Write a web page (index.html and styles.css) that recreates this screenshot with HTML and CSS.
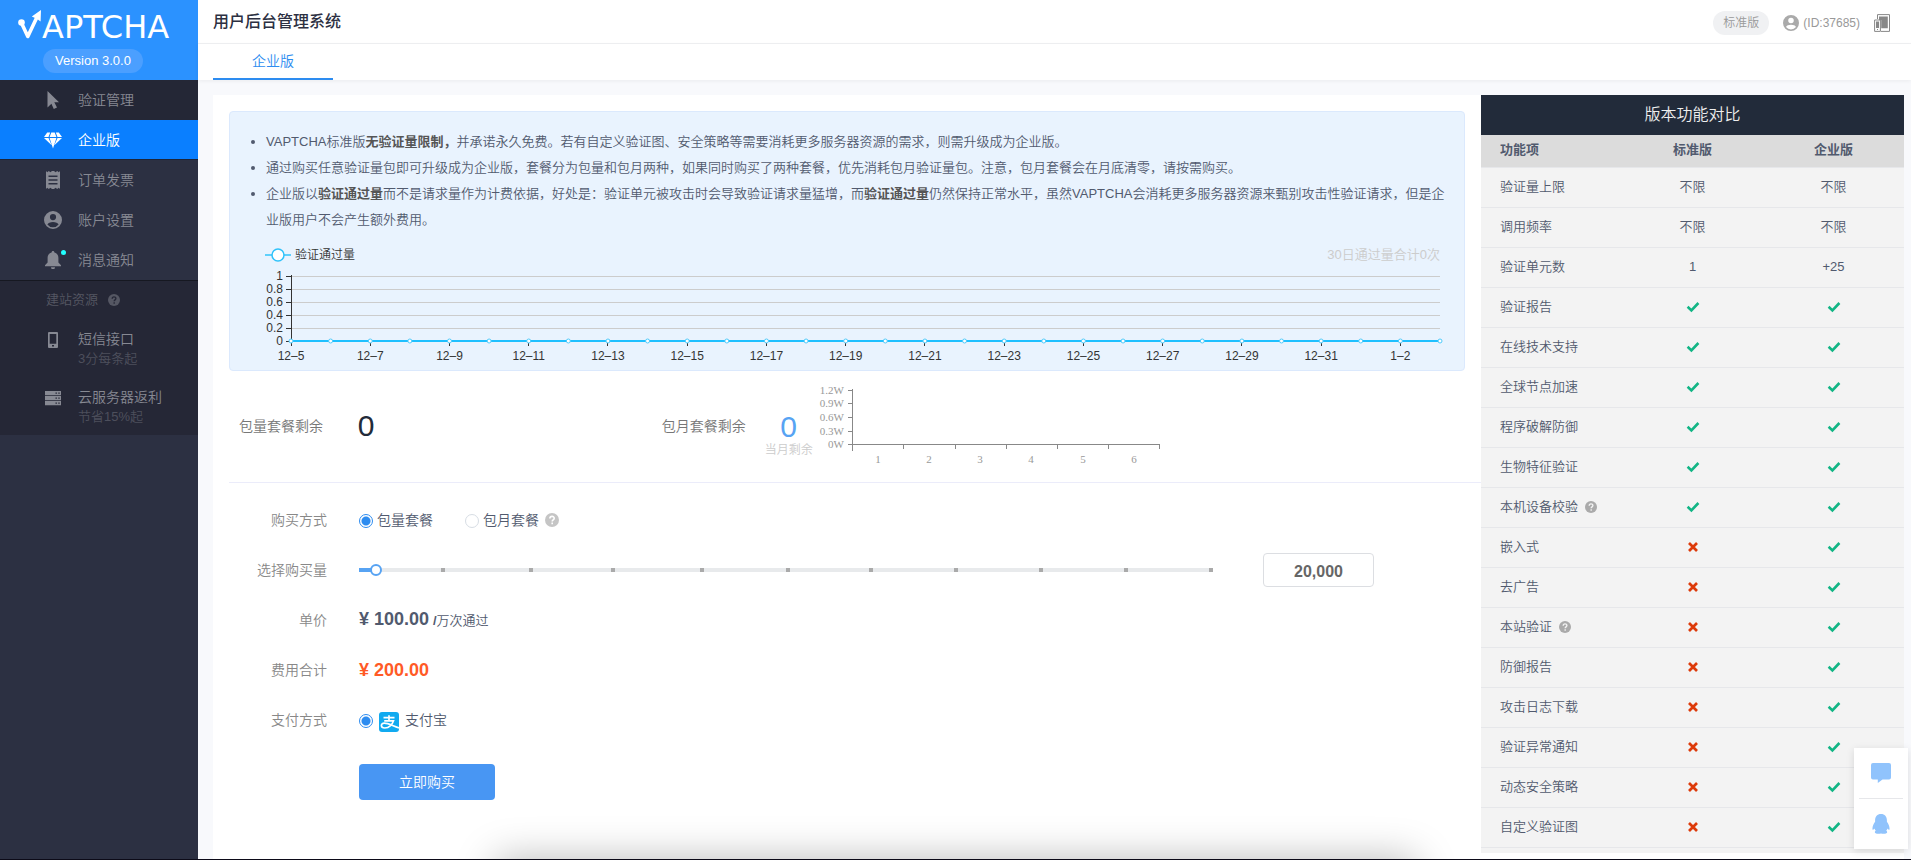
FILE: index.html
```html
<!DOCTYPE html>
<html lang="zh-CN">
<head>
<meta charset="utf-8">
<title>用户后台管理系统</title>
<link rel="stylesheet" href="styles.css">
</head>
<body>
<svg class="sprite" aria-hidden="true">
  <symbol id="i-check" viewBox="0 0 14 12"><path d="M1.6 5.8 5.4 9.4 12.4 2" fill="none" stroke="#12b585" stroke-width="2.6"/></symbol>
  <symbol id="i-cross" viewBox="0 0 14 12"><path d="M3 2 11 10M11 2 3 10" fill="none" stroke="#dd3a0a" stroke-width="2.7"/></symbol>
  <symbol id="i-help" viewBox="0 0 14 14"><circle cx="7" cy="7" r="7" fill="currentColor"/><path d="M4.9 5.6c0-3 4.3-2.8 4.3-.3 0 1.6-2 1.5-2 3.1M7.2 9.6v1.7" fill="none" stroke="var(--mark)" stroke-width="1.6"/></symbol>
  <symbol id="i-user" viewBox="0 0 18 18"><path fill="currentColor" fill-rule="evenodd" d="M9 0a9 9 0 1 1 0 18A9 9 0 0 1 9 0Zm0 3a3.1 3.1 0 1 0 0 6.200A3.100 3.100 0 0 0 9 3Zm0 8c-2.700 0-5 1-5.600 2.400a7 7 0 0 0 11.200 0C14 12 11.700 11 9 11Z"/></symbol>
</svg>

<nav class="sidebar">
  <div class="brand">
    <div class="logo">
      <svg class="logo-mark" viewBox="0 0 24 30" aria-hidden="true"><circle cx="3.500" cy="12.500" r="3.300" fill="#fff"/><path d="M3.500 13 9.800 26.500 19.500 6" fill="none" stroke="#fff" stroke-width="3.600" stroke-linejoin="round"/><path d="M13.800 6.600 23 0 22.600 11.500 19.200 9Z" fill="#fff"/></svg>
      <span>APTCHA</span>
    </div>
    <span class="version">Version 3.0.0</span>
  </div>
  <ul class="menu">
    <li><a class="menu-link visited" href="#"><svg viewBox="0 0 18 18"><path fill="currentColor" d="M3.500 0 15 11.200H10.300L13 16.600 9.800 18 7.400 12.800 3.500 16.500Z"/></svg>验证管理</a></li>
    <li><a class="menu-link active" href="#" aria-current="page"><svg viewBox="0 0 18 18"><path fill="currentColor" d="M3.200 1.500h3L4.500 6H0ZM7.300 1.500h3.400L12.400 6H5.600ZM11.800 1.500h3L18 6h-4.500ZM0 7h4.500l3.200 7.300ZM5.600 7h6.800L9 17.500ZM13.500 7H18l-7.700 7.300Z"/></svg>企业版</a></li>
    <li><a class="menu-link" href="#"><svg viewBox="0 0 18 18"><path fill="currentColor" fill-rule="evenodd" d="M2 0 3.200 1.200 4.800 0 6.400 1.200 8 0h2l1.600 1.200L13.200 0l1.600 1.200L16 0v18l-1.200-1.200L13.200 18l-1.600-1.200L10 18H8l-1.600-1.200L4.800 18l-1.600-1.200L2 18ZM4.500 4.500V6h9V4.500Zm0 3.800v1.500h9V8.300Zm0 3.700v1.500h9V12Z"/></svg>订单发票</a></li>
    <li><a class="menu-link" href="#"><svg><use href="#i-user"/></svg>账户设置</a></li>
    <li><a class="menu-link" href="#"><span class="bell"><svg viewBox="0 0 18 18"><path fill="currentColor" d="M9 0c.9 0 1.400.6 1.400 1.500 2.600.7 4 2.900 4 5.500v4.500L17 14.300v1H1v-1l2.600-2.800V7c0-2.600 1.400-4.800 4-5.500C7.600.6 8.100 0 9 0ZM7 16.300h4A2 2 0 0 1 7 16.300Z"/></svg></span>消息通知</a></li>
  </ul>
  <section class="resources">
    <h2>建站资源 <svg class="help"><use href="#i-help"/></svg></h2>
    <a class="resource" href="#"><svg viewBox="0 0 18 18"><path fill="currentColor" fill-rule="evenodd" d="M5 1h8a1 1 0 0 1 1 1v14a1 1 0 0 1-1 1H5a1 1 0 0 1-1-1V2a1 1 0 0 1 1-1Zm.700 2v9.800h6.600V3ZM8 14v1.500h2V14Z"/></svg><span>短信接口<small>3分每条起</small></span></a>
    <a class="resource" href="#"><svg viewBox="0 0 18 18"><path fill="currentColor" fill-rule="evenodd" d="M1 2h16v4.200H1Zm10.500 1.400v1.400h1.400V3.400Zm2.800 0v1.400h1.400V3.400ZM1 7h16v4.200H1Zm10.500 1.400v1.400h1.400V8.400Zm2.800 0v1.400h1.400V8.400ZM1 12h16v4.200H1Zm10.500 1.400v1.400h1.400v-1.400Zm2.800 0v1.400h1.400v-1.400Z"/></svg><span>云服务器返利<small>节省15%起</small></span></a>
  </section>
</nav>

<div class="page">
  <header class="topbar">
    <h1>用户后台管理系统</h1>
    <div class="account">
      <span class="plan">标准版</span>
      <a class="user" href="#"><svg><use href="#i-user"/></svg>(ID:37685)</a>
      <button class="devices" type="button" aria-label="设备"><svg viewBox="0 0 16 18"><path d="M3.500 5V.600h12v16.800H7" fill="none" stroke="#888"/><path fill="#888" d="M5 2.500h8.800v11.800H7.200V6H5Z"/><path d="M.600 6h5.800v11.400H.600Z" fill="#fff" stroke="#888"/><path fill="#888" d="M2 7.600h3V14H2ZM3 15h1v1H3Z"/></svg></button>
    </div>
  </header>
  <nav class="tabs"><a class="tab" href="#" aria-current="page">企业版</a></nav>

  <div class="content">
    <main class="main">
      <section class="notice">
        <ul>
          <li>VAPTCHA标准版<b>无验证量限制，</b>并承诺永久免费。若有自定义验证图、安全策略等需要消耗更多服务器资源的需求，则需升级成为企业版。</li>
          <li>通过购买任意验证量包即可升级成为企业版，套餐分为包量和包月两种，如果同时购买了两种套餐，优先消耗包月验证量包。注意，包月套餐会在月底清零，请按需购买。</li>
          <li>企业版以<b>验证通过量</b>而不是请求量作为计费依据，好处是：验证单元被攻击时会导致验证请求量猛增，而<b>验证通过量</b>仍然保持正常水平，虽然VAPTCHA会消耗更多服务器资源来甄别攻击性验证请求，但是企业版用户不会产生额外费用。</li>
        </ul>
        <div class="chart-head">
          <span class="legend"><svg viewBox="0 0 26 14"><path d="M0 7h26" stroke="#5fd0fb" stroke-width="2"/><circle cx="13" cy="7" r="6" fill="#fff" stroke="#2ec2fa" stroke-width="1.500"/></svg>验证通过量</span>
          <span class="total">30日通过量合计0次</span>
        </div>
        <div class="plot"><svg id="usage" role="img" aria-label="验证通过量"></svg></div>
      </section>

      <section class="quotas">
        <div class="quota"><span>包量套餐剩余</span><strong class="amount">0</strong></div>
        <div class="quota">
          <span>包月套餐剩余</span>
          <div class="monthly"><strong class="amount">0</strong><small>当月剩余</small></div>
          <svg class="months" viewBox="0 0 350 80">
            <path d="M37.500 3V65M33 4.500h4.500M33 17.500h4.500M33 31.500h4.500M33 45.500h4.500M33 58.500H345M88.500 58v5M140.500 58v5M191.500 58v5M242.500 58v5M293.500 58v5M344.500 58v5" fill="none" stroke="#888"/>
            <g text-anchor="end"><text x="29" y="8">1.2W</text><text x="29" y="21">0.9W</text><text x="29" y="35">0.6W</text><text x="29" y="49">0.3W</text><text x="29" y="62">0W</text></g>
            <g text-anchor="middle"><text x="63" y="77">1</text><text x="114" y="77">2</text><text x="165" y="77">3</text><text x="216" y="77">4</text><text x="268" y="77">5</text><text x="319" y="77">6</text></g>
          </svg>
        </div>
      </section>

      <form class="order">
        <div class="row"><span class="name">购买方式</span>
          <div class="field">
            <label class="choice"><input type="radio" name="mode" checked>包量套餐</label>
            <label class="choice"><input type="radio" name="mode">包月套餐</label>
            <svg class="help"><use href="#i-help"/></svg>
          </div>
        </div>
        <div class="row"><label class="name" for="amount">选择购买量</label>
          <div class="field volume">
            <div class="slider">
              <i style="left:9.8%"></i><i style="left:20.1%"></i><i style="left:29.8%"></i><i style="left:40.2%"></i><i style="left:50.2%"></i><i style="left:60%"></i><i style="left:69.9%"></i><i style="left:79.9%"></i><i style="left:89.8%"></i><i style="left:99.8%"></i>
              <input type="range" id="amount" min="0" max="1000000" step="10000" value="20000">
            </div>
            <input class="count" type="text" value="20,000" aria-label="购买量">
          </div>
        </div>
        <div class="row"><span class="name">单价</span><div class="field"><span class="price"><b>¥ 100.00</b> <span><b>/</b>万次通过</span></span></div></div>
        <div class="row"><span class="name">费用合计</span><div class="field"><b class="sum">¥ 200.00</b></div></div>
        <div class="row"><span class="name">支付方式</span>
          <div class="field">
            <label class="choice"><input type="radio" name="pay" checked><svg class="alipay" viewBox="0 0 20 20"><rect width="20" height="20" rx="3" fill="#11aaf0"/><path d="M4.500 5.700h11M10 3.200v5.600M5.200 8.800h9.300C13.500 12 10.500 16 5.800 16c-4.600 0-4.300-4.800-.5-4.800 4 0 8 2.600 14.700 4.800" fill="none" stroke="#fff" stroke-width="1.700"/></svg>支付宝</label>
          </div>
        </div>
        <div class="row submit"><button class="buy" type="button">立即购买</button></div>
      </form>
    </main>

    <aside class="compare">
      <h2>版本功能对比</h2>
      <table>
        <thead><tr><th>功能项</th><th>标准版</th><th>企业版</th></tr></thead>
        <tbody>
          <tr><td>验证量上限</td><td>不限</td><td>不限</td></tr>
          <tr><td>调用频率</td><td>不限</td><td>不限</td></tr>
          <tr><td>验证单元数</td><td>1</td><td>+25</td></tr>
          <tr><td>验证报告</td><td><svg><use href="#i-check"/></svg></td><td><svg><use href="#i-check"/></svg></td></tr>
          <tr><td>在线技术支持</td><td><svg><use href="#i-check"/></svg></td><td><svg><use href="#i-check"/></svg></td></tr>
          <tr><td>全球节点加速</td><td><svg><use href="#i-check"/></svg></td><td><svg><use href="#i-check"/></svg></td></tr>
          <tr><td>程序破解防御</td><td><svg><use href="#i-check"/></svg></td><td><svg><use href="#i-check"/></svg></td></tr>
          <tr><td>生物特征验证</td><td><svg><use href="#i-check"/></svg></td><td><svg><use href="#i-check"/></svg></td></tr>
          <tr><td>本机设备校验<svg class="help"><use href="#i-help"/></svg></td><td><svg><use href="#i-check"/></svg></td><td><svg><use href="#i-check"/></svg></td></tr>
          <tr><td>嵌入式</td><td><svg><use href="#i-cross"/></svg></td><td><svg><use href="#i-check"/></svg></td></tr>
          <tr><td>去广告</td><td><svg><use href="#i-cross"/></svg></td><td><svg><use href="#i-check"/></svg></td></tr>
          <tr><td>本站验证<svg class="help"><use href="#i-help"/></svg></td><td><svg><use href="#i-cross"/></svg></td><td><svg><use href="#i-check"/></svg></td></tr>
          <tr><td>防御报告</td><td><svg><use href="#i-cross"/></svg></td><td><svg><use href="#i-check"/></svg></td></tr>
          <tr><td>攻击日志下载</td><td><svg><use href="#i-cross"/></svg></td><td><svg><use href="#i-check"/></svg></td></tr>
          <tr><td>验证异常通知</td><td><svg><use href="#i-cross"/></svg></td><td><svg><use href="#i-check"/></svg></td></tr>
          <tr><td>动态安全策略</td><td><svg><use href="#i-cross"/></svg></td><td><svg><use href="#i-check"/></svg></td></tr>
          <tr><td>自定义验证图</td><td><svg><use href="#i-cross"/></svg></td><td><svg><use href="#i-check"/></svg></td></tr>
        </tbody>
      </table>
    </aside>
  </div>
</div>

<div class="contact">
  <button type="button" aria-label="在线咨询"><svg viewBox="0 0 20 20"><path fill="currentColor" d="M2 0h16a2 2 0 0 1 2 2v12.500a2 2 0 0 1-2 2h-6.500L6.800 20v-3.500H2a2 2 0 0 1-2-2V2a2 2 0 0 1 2-2Z"/></svg></button>
  <button type="button" aria-label="QQ"><svg viewBox="0 0 20 20"><path fill="currentColor" d="M10 0c3.800 0 5.900 2.500 5.900 6.300v1.500c1.600 2.300 2.900 4.700 2.600 7.600-.5 1-1.300-.2-2-.9-.2.900-.7 1.700-1.300 2.300 1 .5 1.200 1.200.7 2.200-2 1.100-4 .9-5.900.6-1.900.3-3.900.5-5.900-.6-.5-1-.3-1.700.7-2.200-.6-.6-1.100-1.400-1.300-2.300-.7.700-1.500 1.900-2 .9-.3-2.900 1-5.300 2.600-7.600V6.300C4.100 2.500 6.200 0 10 0Z"/></svg></button>
</div>
<div class="dock-shadow"></div>
<script src="chart.js"></script>
</body>
</html>
```
FILE: styles.css
```css
* { box-sizing: border-box; }
body {
  margin: 0;
  min-height: 100vh;
  display: flex;
  border-bottom: 1px solid #0c0a18;
  background: #f8f9fc;
  color: #515a6e;
  font: 14px/20px "Liberation Sans", "Noto Sans CJK SC", sans-serif;
  font-weight: 350;
}
h1, h2, ul { margin: 0; padding: 0; }
a { color: inherit; text-decoration: none; }
button { border: 0; padding: 0; background: none; font: inherit; cursor: pointer; }
svg { display: block; flex: none; }
.sprite { position: absolute; width: 0; height: 0; }
.help { width: 12px; height: 12px; color: #aaa; --mark: #f3f3f3; }

/* Sidebar */
.sidebar { flex: none; width: 198px; background: #2c3042; color: #878993; }
.brand { height: 80px; display: flex; flex-direction: column; background: #2b92ff; color: #fff; }
.logo { display: flex; height: 40px; padding: 10px 0 0 18px; font: 32px/34px "DejaVu Sans", sans-serif; }
.logo-mark { width: 24px; height: 30px; }
.version { width: 100px; margin: 9px 0 0 43px; border-radius: 12px; background: #4b9fff; font-size: 13px; line-height: 24px; text-align: center; }
.menu { list-style: none; }
.menu-link { display: flex; align-items: center; gap: 16px; height: 40px; padding-left: 44px; }
.menu-link svg { width: 18px; height: 18px; }
.menu-link.visited { background: #242736; }
.menu-link.active { background: #0a7fff; border-bottom: 1px solid #1d2538; color: #fff; }
.bell { position: relative; }
.bell::after { content: ""; position: absolute; top: -1px; right: -4px; width: 5px; height: 5px; border-radius: 50%; background: #2ff; }
.resources { border-top: 1px solid #161821; background: #252736; }
.resources h2 { display: flex; align-items: center; gap: 10px; height: 38px; padding-left: 46px; color: #555763; font-size: 13px; font-weight: 350; }
.resources .help { color: #555763; --mark: #252736; }
.resource { display: flex; gap: 16px; padding: 10px 0 8px 44px; }
.resource svg { width: 18px; height: 18px; margin-top: 2px; }
.resource small { display: block; color: #4d4f5c; font-size: 13px; }

/* Header */
.page { flex: 1; min-width: 0; display: flex; flex-direction: column; }
.topbar { display: flex; justify-content: space-between; align-items: center; height: 44px; padding: 0 21px 0 15px; border-bottom: 1px solid #f0f1f3; background: #fff; }
.topbar h1 { color: #2c3042; font-size: 16px; font-weight: 500; }
.account { display: flex; align-items: center; padding-top: 2px; color: #999; font-size: 12px; }
.plan { width: 56px; border-radius: 12px; background: #f0f1f3; line-height: 24px; text-align: center; }
.user { display: flex; align-items: center; gap: 4px; margin: 0 14px; }
.user svg { width: 16px; height: 16px; color: #aaa; }
.devices svg { width: 16px; height: 18px; }
.tabs { height: 36px; padding-left: 15px; background: #fff; box-shadow: 0 1px 4px rgba(0, 0, 0, .06); }
.tab { display: block; width: 120px; height: 36px; border-bottom: 2px solid #2d8cf0; color: #2d8cf0; line-height: 34px; text-align: center; }

/* Content */
.content { flex: 1; display: flex; align-items: flex-start; margin: 15px 7px 0 15px; background: #fff; }
.main { flex: 1; min-width: 0; padding: 16px 0 20px 16px; }
.notice { margin-right: 16px; padding: 17px 14px 5px 35px; border: 1px solid #dbe9fd; border-radius: 4px; background: #e9f3fe; font-size: 13px; line-height: 26px; }
.notice ul { padding-left: 1px; }
.notice b { color: #555; font-weight: 700; }
.chart-head { display: flex; justify-content: space-between; align-items: center; height: 28px; margin: 8px 10px 0 0; }
.legend { display: flex; align-items: center; gap: 4px; color: #333; font-size: 12px; }
.legend svg { width: 26px; height: 14px; }
.total { color: #ccc; }
.plot { margin: 0 10px 0 26px; }
.plot svg { width: 100%; height: 96px; overflow: visible; font-size: 12px; }
.plot text { fill: #333; }
.plot line { shape-rendering: crispEdges; }
.grid { stroke: #ccc; }
.axis { stroke: #333; }
.series { stroke: #1fc0ff; stroke-width: 2; }
.plot circle { fill: #fff; stroke: #4fcbfc; }

.quotas { display: grid; grid-template-columns: 1fr 2fr; column-gap: 8px; height: 112px; padding-bottom: 2px; border-bottom: 1px solid #ebecfa; }
.quota { display: flex; align-items: center; padding-left: 10px; color: #777; }
.amount { width: 48px; margin-left: 19px; color: #222b3a; font-size: 30px; font-weight: 400; line-height: 30px; text-align: center; }
.monthly { display: flex; flex-direction: column; margin-left: 19px; padding-top: 18px; }
.monthly .amount { margin-left: 0; color: #57a3f3; }
.monthly small { color: #ccc; font-size: 12px; line-height: 16px; }
.months { width: 350px; height: 80px; margin-left: 2px; overflow: visible; font: 11px "Liberation Serif", serif; }
.months text { fill: #999; }

.order { display: flex; flex-direction: column; gap: 16px; padding: 20px 107px 0 0; }
.row { display: flex; align-items: center; gap: 32px; height: 34px; }
.name { flex: none; width: 98px; color: #888; text-align: right; }
.field { flex: 1; display: flex; align-items: center; }
.choice { display: flex; align-items: center; margin-right: 32px; }
.choice + .help { width: 14px; height: 14px; margin-left: -26px; color: #c5c5c5; --mark: #fff; }
.choice input { appearance: none; width: 14px; height: 14px; margin: 2px 4px 0 0; border: 1px solid #d7dde4; border-radius: 50%; background: #fff; }
.choice input:checked { border-color: #2d8cf0; background: radial-gradient(circle, #2d8cf0 4px, #fff 5px); }
.alipay { width: 20px; height: 20px; margin: 4px 6px 0 2px; }
.volume { gap: 50px; }
.slider { position: relative; flex: 1; height: 4px; background: linear-gradient(90deg, #57a3f3 2%, #e8eaec 2%); }
.slider i { position: absolute; top: 0; width: 4px; height: 4px; margin-left: -2px; background: #aaa; }
.slider input { appearance: none; position: absolute; top: -4px; left: -6px; width: calc(100% + 12px); height: 12px; margin: 0; background: none; }
.slider input::-webkit-slider-thumb { appearance: none; width: 12px; height: 12px; border: 2px solid #57a3f3; border-radius: 50%; background: #fff; }
.count { width: 111px; height: 34px; padding: 4px 0 0; border: 1px solid #dcdee2; border-radius: 4px; color: #666; font: bold 16px "Liberation Sans", sans-serif; text-align: center; }
.price > b, .sum { font-size: 18px; font-weight: 700; }
.price > span { font-size: 13px; }
.sum { color: #ff5a26; }
.submit { height: 36px; margin: 11px 0 0 130px; }
.buy { width: 136px; height: 36px; border-radius: 4px; background: #4896f3; color: #fff; }

/* Plan comparison */
.compare { flex: none; width: 423px; padding-bottom: 5px; background: #f3f3f3; }
.compare h2 { background: #222b3a; color: #eee; font-size: 16px; font-weight: 350; line-height: 40px; text-align: center; }
.compare table { width: 100%; table-layout: fixed; border-collapse: separate; border-spacing: 0; font-size: 13px; text-align: center; }
.compare th { height: 33px; padding: 0 0 2px; border-bottom: 1px solid #e6e7ea; background: #dcdcdc; font-weight: 600; }
.compare td { height: 40px; padding: 0 0 1px; border-bottom: 1px solid #e6e7ea; }
.compare tr > :first-child { padding-left: 19px; text-align: left; }
.compare td svg { width: 14px; height: 12px; margin: 0 auto; }
.compare td .help { display: inline-block; width: 12px; margin-left: 7px; vertical-align: -2px; }

/* Floating contact panel */
.contact { position: fixed; right: 3px; bottom: 11px; width: 54px; padding: 0 5px; background: #fff; box-shadow: 0 2px 8px rgba(0, 0, 0, .12); color: #90c3fc; }
.contact button { display: flex; align-items: center; justify-content: center; width: 44px; height: 50px; color: inherit; }
.contact button + button { height: 51px; border-top: 1px solid #e6e7ea; }
.contact svg { width: 20px; height: 20px; }
.dock-shadow { position: fixed; left: 0; right: 0; bottom: -79px; width: 920px; height: 80px; margin: 0 auto; box-shadow: 0 0 40px rgba(0, 0, 0, .28); pointer-events: none; clip-path: inset(-60px -60px 79px -60px); }
```
FILE: chart.js
```js
const svg = document.getElementById("usage");
const BASE = 72;
const STEP = 13;
const DAYS = 30;

function add(tag, attrs, text) {
  const el = document.createElementNS("http://www.w3.org/2000/svg", tag);
  for (const key in attrs) el.setAttribute(key, attrs[key]);
  if (text !== undefined) el.textContent = text;
  svg.append(el);
}

["0", "0.2", "0.4", "0.6", "0.8", "1"].forEach((label, i) => {
  const y = BASE - i * STEP;
  add("line", { class: "grid", x1: 0, x2: "100%", y1: y, y2: y });
  add("line", { class: "axis", x1: -5, x2: 0, y1: y, y2: y });
  add("text", { x: -8, y: y + 4, "text-anchor": "end" }, label);
});
add("line", { class: "axis", x1: 0, x2: 0, y1: 6, y2: BASE });

const position = (i) => (i * 100) / (DAYS - 1) + "%";
for (let i = 0; i < DAYS; i += 2) {
  const day = new Date(2021, 11, 5 + i);
  add("line", { class: "axis", x1: position(i), x2: position(i), y1: BASE, y2: BASE + 5 });
  add("text", { x: position(i), y: BASE + 19, "text-anchor": "middle" }, `${day.getMonth() + 1}–${day.getDate()}`);
}
add("line", { class: "series", x1: 0, x2: "100%", y1: BASE, y2: BASE });
for (let i = 0; i < DAYS; i++) add("circle", { cx: position(i), cy: BASE, r: 2 });
```
